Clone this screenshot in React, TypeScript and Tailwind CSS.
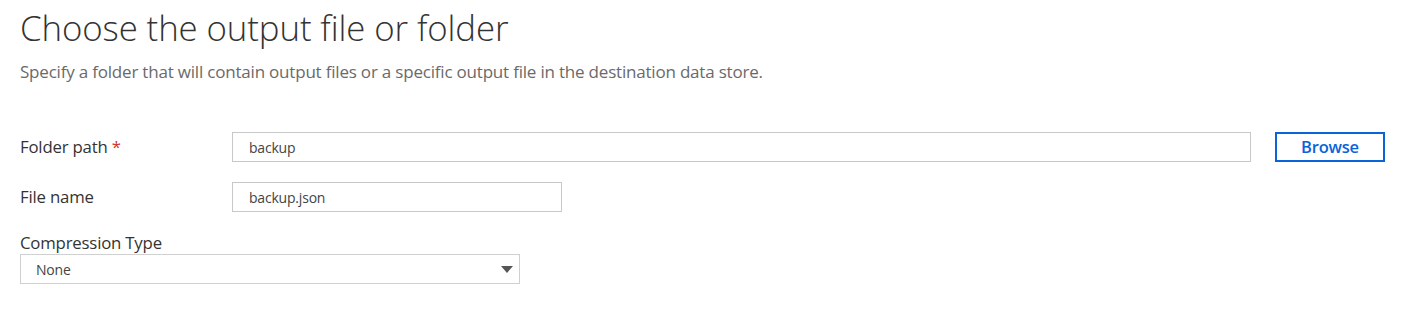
import React from "react";

export default function App() {
  return (
    <div className="w-[1412px] h-[325px] bg-white pl-5 pr-[27px] pt-[6px]" style={{ fontFamily: '"Open Sans", "Noto Sans", sans-serif' }}>
      <h1 className="text-[34.8px] leading-[44px] text-[#333333] font-light tracking-[-0.1px]">Choose the output file or folder</h1>
      <p className="mt-[11px] text-[17px] leading-[22px] text-[#6a6a6a] tracking-[-0.2px]">
        Specify a folder that will contain output files or a specific output file in the destination data store.
      </p>

      <div className="mt-[49px] flex items-center">
        <div className="w-[212px] text-[16.8px] text-[#333333] tracking-[-0.2px]">
          Folder path <span className="text-[#d13438]">*</span>
        </div>
        <div className="flex-1 h-[30px] border border-[#c8c8c8] flex items-center pl-[16px] text-[14px] text-[#444444] tracking-[-0.2px]">backup</div>
        <button className="ml-[24px] w-[110px] h-[30px] border-2 border-[#0a64d8] text-[#0a64d8] text-[16.5px] font-semibold tracking-[-0.2px] flex items-center justify-center">Browse</button>
      </div>

      <div className="mt-[20px] flex items-center">
        <div className="w-[212px] text-[16.8px] text-[#333333] tracking-[-0.2px]">File name</div>
        <div className="w-[330px] h-[30px] border border-[#c8c8c8] flex items-center pl-[16px] text-[14px] text-[#444444] tracking-[-0.2px]">backup.json</div>
      </div>

      <div className="mt-[20px] text-[16.8px] leading-[22px] text-[#333333] tracking-[-0.2px]">Compression Type</div>
      <div className="w-[500px] h-[30px] border border-[#d0d0d0] flex items-center justify-between pl-[15px] pr-[6px] text-[14px] text-[#444444] tracking-[-0.2px]">
        <span>None</span>
        <svg width="12" height="7" viewBox="0 0 12 7"><path d="M0 0 L12 0 L6 7 Z" fill="#555555" /></svg>
      </div>
    </div>
  );
}
